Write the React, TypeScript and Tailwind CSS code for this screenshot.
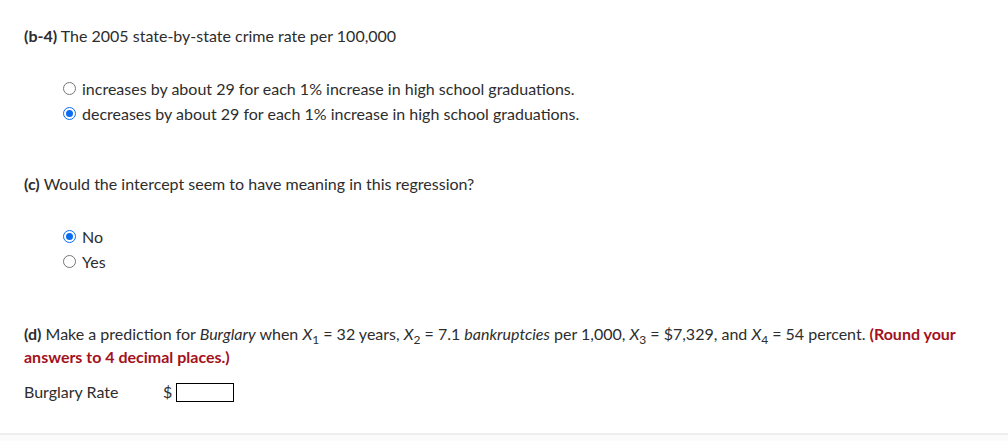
import React from "react";

function Radio({ checked }: { checked?: boolean }) {
  return checked ? (
    <span className="flex w-[13px] h-[13px] rounded-full border-[1.5px] border-[#0b6cf0] bg-white items-center justify-center mr-[6px] shrink-0">
      <span className="block w-[7px] h-[7px] rounded-full bg-[#0b6cf0]" />
    </span>
  ) : (
    <span className="block w-[13px] h-[13px] rounded-full border border-[#767676] bg-white mr-[6px] shrink-0" />
  );
}

function Opt({ checked, children }: { checked?: boolean; children: React.ReactNode }) {
  return (
    <div className="flex items-center h-[25px]">
      <Radio checked={checked} />
      <span>{children}</span>
    </div>
  );
}

function X({ n }: { n: string }) {
  return (
    <>
      <i>X</i>
      <span className="relative top-[4px] text-[12px] leading-[0]">{n}</span>
    </>
  );
}

export default function App() {
  const f = { fontFamily: "Lato, 'Open Sans', Arial, sans-serif" };
  return (
    <div className="w-[1008px] h-[441px] bg-white text-[#2d2d2d] text-[16px] leading-[20px] flex flex-col" style={f}>
      <div className="flex-1 pl-[24px] pt-[26px]">
        <div>
          <b>(b-4)</b> The 2005 state-by-state crime rate per 100,000
        </div>
        <div className="pl-[39px] mt-[30px]">
          <Opt>increases by about 29 for each 1% increase in high school graduations.</Opt>
          <Opt checked>decreases by about 29 for each 1% increase in high school graduations.</Opt>
        </div>
        <div className="mt-[48px]">
          <b>(c)</b> Would the intercept seem to have meaning in this regression?
        </div>
        <div className="pl-[39px] mt-[30px]">
          <Opt checked>No</Opt>
          <Opt>Yes</Opt>
        </div>
        <div className="mt-[48px] leading-[23px] w-[940px]">
          <b>(d)</b> Make a prediction for <i>Burglary</i> when <X n="1" /> = 32 years, <X n="2" /> = 7.1{" "}
          <i>bankruptcies</i> per 1,000, <X n="3" /> = $7,329, and <X n="4" /> = 54 percent.{" "}
          <b className="text-[#a3111c]">(Round your answers to 4 decimal places.)</b>
        </div>
        <div className="flex items-center mt-[14px]">
          <span className="w-[139px]">Burglary Rate</span>
          <span className="mr-[4px]">$</span>
          <span className="block w-[58px] h-[19px] border border-black bg-white" />
        </div>
      </div>
      <div className="h-[8px] border-t-2 border-[#eeeeee] bg-[#fbfbfb]" />
    </div>
  );
}
